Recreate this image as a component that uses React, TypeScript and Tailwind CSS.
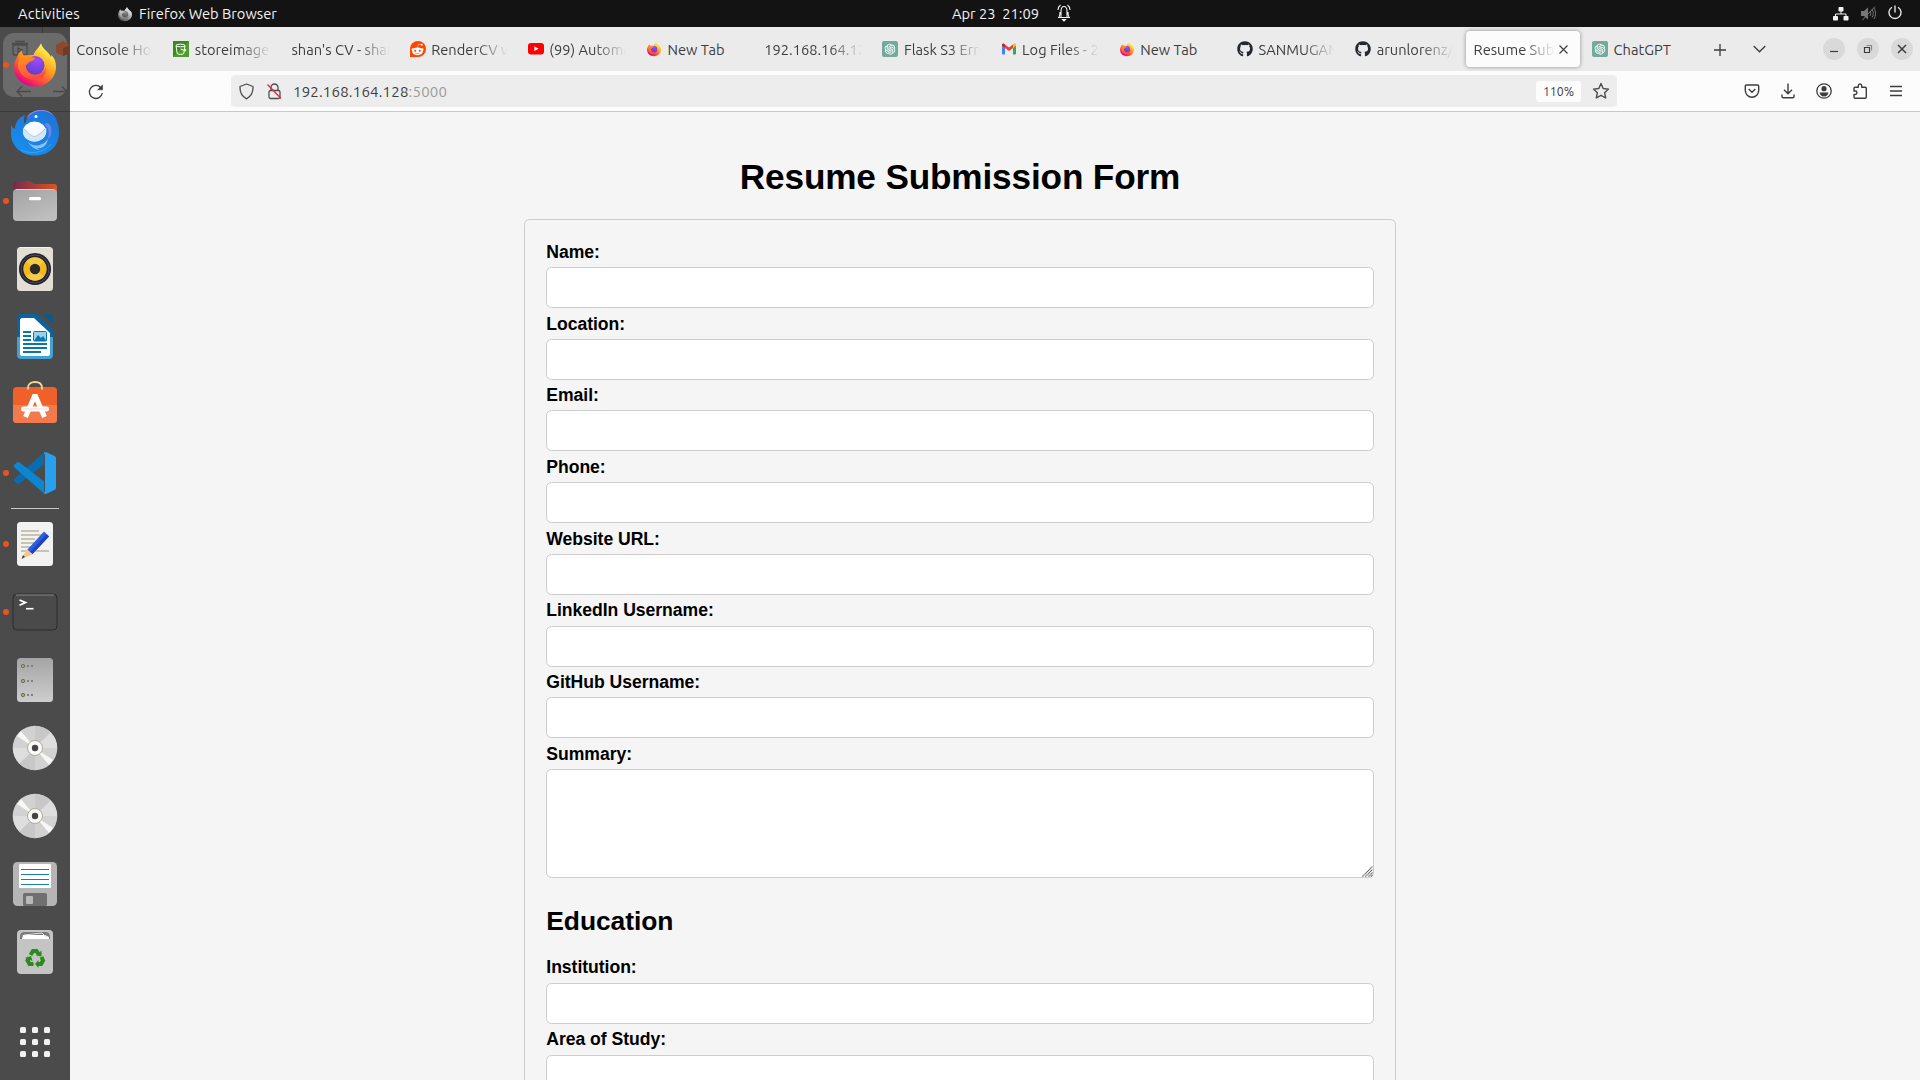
import React, { ReactNode } from "react";
import { FaGithub, FaRedditAlien } from "react-icons/fa";
import { AiOutlineOpenAI } from "react-icons/ai";

/* ---------- brand icons ---------- */

function FirefoxIcon({ size, id, mono = false }: { size: number; id: string; mono?: boolean }) {
  const c = mono
    ? { a: "#f0f0f0", b: "#b5b5b5", c: "#7d7d7d", d: "#5c5c5c", e: "#8f8f8f", f: "#4a4a4a", g: "#d0d0d0" }
    : { a: "#fff44f", b: "#ffa11e", c: "#ff4a3d", d: "#e3008f", e: "#9a4dff", f: "#5b3cc4", g: "#ff9a1c" };
  return (
    <svg width={size} height={size} viewBox="0 0 48 48" className="shrink-0">
      <defs>
        <linearGradient id={id + "a"} x1="0.85" y1="0.05" x2="0.25" y2="0.95">
          <stop offset="0.1" stopColor={c.a} />
          <stop offset="0.45" stopColor={c.b} />
          <stop offset="0.75" stopColor={c.c} />
          <stop offset="1" stopColor={c.d} />
        </linearGradient>
        <radialGradient id={id + "b"} cx="0.6" cy="0.2" r="0.9">
          <stop offset="0" stopColor={c.e} />
          <stop offset="1" stopColor={c.f} />
        </radialGradient>
        <linearGradient id={id + "c"} x1="0" y1="0" x2="0.4" y2="1">
          <stop offset="0" stopColor={c.g} />
          <stop offset="1" stopColor={c.c} />
        </linearGradient>
      </defs>
      <path
        fill={`url(#${id}a)`}
        d="M30 2c-1 4-6 7-7.500 12L13 14.500c-1.500-1-2-3-2.300-5C8 11 6.500 14 6 16.500 4 19.500 3 22.500 3 26c0 11 9.300 19.500 21 19.500S45 37 45 25.500c0-5-2-9-4.500-11.500 0 1-.2 1.500-.5 2C38 11 31.500 8.500 30 2z"
      />
      <circle cx="24" cy="24.500" r="9.500" fill={`url(#${id}b)`} />
      <path
        fill={`url(#${id}c)`}
        d="M9 15.500c5-1.500 8-1 11 .5 1.500.5 3 .500 4 .500 0 2.500-2.500 3.500-5.500 4.500-1.500.6-2 3-4 3.500 1 6 5 9.500 10 9.500 5 0 9-3 10.300-7.500C35 35 30 39.500 23 39 14 38.500 7 32 7 23z"
      />
    </svg>
  );
}

function OpenAiIcon() {
  return (
    <span className="flex size-4 shrink-0 items-center justify-center rounded-[2px] bg-[#74aa9c]">
      <AiOutlineOpenAI className="size-[14px] text-white" />
    </span>
  );
}

function BucketIcon() {
  return (
    <svg width="16" height="16" viewBox="0 0 16 16" className="shrink-0">
      <rect width="16" height="16" fill="#3a8a20" />
      <path d="M0 16L16 0v16z" fill="#4d9c2c" />
      <g fill="none" stroke="#fff" strokeWidth="1">
        <ellipse cx="7.500" cy="4.500" rx="4.500" ry="1.300" />
        <path d="M3 4.500l1.200 8c1.500 1.200 5.200 1.200 6.600 0l1.200-8" />
        <path d="M7.500 8l5 1.800c.8-.2.6-1-.5-1.800" />
      </g>
    </svg>
  );
}

function RedditIcon() {
  return (
    <span className="flex size-4 shrink-0 items-center justify-center rounded-full rounded-bl-[2px] bg-[#ff4500]">
      <FaRedditAlien className="size-[13px] text-white" />
    </span>
  );
}

function YoutubeIcon() {
  return (
    <svg width="16" height="16" viewBox="0 0 16 16" className="shrink-0">
      <rect y="2" width="16" height="11.500" rx="3" fill="#f00" />
      <path d="M6.300 5.300l4.200 2.400-4.200 2.400z" fill="#fff" />
    </svg>
  );
}

function GmailIcon() {
  return (
    <svg width="16" height="16" viewBox="0 0 16 16" className="shrink-0">
      <path d="M1 4.500v8.300c0 .5.400.7.8.7H4V7z" fill="#4285f4" />
      <path d="M15 4.500v8.300c0 .5-.4.700-.8.700H12V7z" fill="#34a853" />
      <path d="M12 3.600V7l3-2.200V4c0-1.500-1.400-1.900-2.300-1.200z" fill="#fbbc04" />
      <path d="M4 7V3.500l4 3 4-3V7l-4 3z" fill="#ea4335" />
      <path d="M1 4v.8L4 7V3.500l-.8-.7C2.300 2.100 1 2.600 1 4z" fill="#c5221f" />
    </svg>
  );
}

/* ---------- top panel ---------- */

function TopPanel() {
  return (
    <header className="flex h-[27px] shrink-0 items-center bg-[#131313] text-[14.670px] leading-[27px] text-[#f2f2f2]">
      <div className="flex w-[952px] items-center">
        <span className="ml-[18px] w-[99px] tracking-[0.18px]">Activities</span>
        <FirefoxIcon size={16} id="fm" mono />
        <span className="ml-[6px]">Firefox Web Browser</span>
      </div>
      <div className="-mt-px flex items-center">
        <span className="whitespace-pre">Apr 23  21:09</span>
        <svg width="14" height="18" viewBox="0 0 14 18" className="ml-[18px]" fill="none" stroke="#f2f2f2" strokeWidth="1.100">
          <path d="M4 13V7.500C4 4 5 2.500 7 2.500S10 4 10 7.500V13M1 13.500h12M2 13c1-1.500 1-3 1-5M12 13c-1-1.500-1-3-1-5M1 6c0-2 .8-3.800 2.500-5M13 6c0-2-.8-3.800-2.500-5" />
          <path d="M5.500 15.500h3L7 17z" fill="#f2f2f2" />
        </svg>
      </div>
      <div className="ml-auto flex items-center gap-[13px] pr-[18px]">
        <svg width="16" height="14" viewBox="0 0 16 14">
          <g fill="#f2f2f2">
            <rect x="5.500" y="0" width="5" height="4.500" rx="0.800" />
            <rect x="0" y="9" width="5" height="4.500" rx="0.800" />
            <rect x="10.500" y="9" width="5" height="4.500" rx="0.800" />
          </g>
          <path d="M8 4v3M2.500 9.500V7h10.500v2.500" fill="none" stroke="#f2f2f2" />
        </svg>
        <svg width="15" height="15" viewBox="0 0 15 15" className="-mt-px -mr-px -ml-px">
          <path d="M0 5h3l4-3.500v12L3 10H0z" fill="#777" />
          <path d="M9 5c1 1.200 1 3.800 0 5M11 3.500c1.700 2 1.700 6 0 8M13 2c2 3 2 8 0 11M14 .5L1.500 14" fill="none" stroke="#777" />
        </svg>
        <svg width="14" height="15" viewBox="0 0 14 15" fill="none" stroke="#f2f2f2" strokeWidth="1.300" className="-mt-[2px]">
          <path d="M7 0.500v7M4 2.300a6 6 0 1 0 6 0" />
        </svg>
      </div>
    </header>
  );
}

/* ---------- dock ---------- */

function DockItem({ children, running = false }: { children?: ReactNode; running?: boolean }) {
  return (
    <div className="relative flex h-[68px] w-[70px] shrink-0 items-center justify-center">
      {running && <span className="absolute top-[31px] left-[3px] size-[6px] rounded-full bg-[#e95420]" />}
      <svg width="48" height="48" viewBox="0 0 48 48" className="relative">
        {children}
      </svg>
    </div>
  );
}

function Disc() {
  return (
    <DockItem>
      <circle cx="24" cy="24" r="22.300" fill="#d2d2d2" />
      <path d="M24 24V2a22 22 0 0 1 15.500 6.500zM24 24v22A22 22 0 0 1 8.500 39.500z" fill="#c8c8c8" />
      <path d="M24 24H2a22 22 0 0 0 6.500 15.500zM24 24h22A22 22 0 0 0 39.500 8.500z" fill="#dedede" />
      <path d="M24 24L6 12l4-5zM24 24l18 12-4 5z" fill="#f7f7f5" />
      <circle cx="24" cy="24" r="7.500" fill="#fafafa" stroke="#b5aa92" />
      <circle cx="24" cy="24" r="3.200" fill="#444" />
    </DockItem>
  );
}

function Dock() {
  return (
    <nav className="relative flex h-full w-[70px] shrink-0 flex-col bg-[#4b4b4b] pt-[4px]">
      {/* Window chrome showing faintly through the translucent dock */}
      <svg width="70" height="86" viewBox="0 0 70 86" className="absolute top-0 left-0" fill="none" stroke="#3b3b3b">
        <path d="M42.500 0v44M0 84.500h70" />
      </svg>
      <div className="relative flex h-full flex-col">
        <div className="relative flex h-[68px] w-[70px] shrink-0 items-center justify-center">
          <span className="absolute top-[2px] left-[3px] size-[64px] rounded-[11px] bg-[#6b6b6b]" />
          <span className="absolute top-[31px] left-[3px] size-[6px] rounded-full bg-[#e95420]" />
          <svg width="70" height="68" viewBox="0 0 70 68" className="absolute top-0 left-0" fill="none" stroke="#4a4a4a" strokeWidth="1.300">
            <rect x="13" y="14" width="14" height="10" rx="1.500" />
            <path d="M12.500 14v-1.500h15V14M15 10.500h10M18 17l4 2-4 2.500zM17 60.500h14M22 55.500l-5 5 5 5M53 60.500h14M62 55.500l5 5-5 5" />
            <path d="M56 14l7-4 7 4v8l-7 3-7-3z" fill="#8b4a2e" stroke="none" />
            <path d="M63 17l7-3v8l-7 3z" fill="#6d3c28" stroke="none" />
          </svg>
          <div className="relative">
            <FirefoxIcon size={48} id="fd" />
          </div>
        </div>

        <DockItem>
          <defs>
            <linearGradient id="tb" x1="0.800" y1="0" x2="0.200" y2="1">
              <stop offset="0" stopColor="#1f73d8" />
              <stop offset="1" stopColor="#1690ee" />
            </linearGradient>
          </defs>
          <path d="M0 16c0 3 .5 5 0 8 0 13 10 22.500 24 22.500S48 37 48 24c0-6-1-9-2-11 0-5-7-12-16-12-7 0-12 3-14 8l-2 6c-2-3-1-6 0-9-5 2-8 5-9 9-1 2-1 3-1 5-2-1-3-2-4-4z" fill="url(#tb)" />
          <path d="M16 9c1-4 6-7.500 13-8 5-.4 11 1 14 6-4-4-9-5.500-14-5-5 .500-9 2.500-13 7z" fill="#9a7ee8" />
          <path d="M33 15c5 4 6 10 3 16 5-3 6-12 2-16-1-1-3-1-5 0z" fill="#6a86e8" />
          <path d="M17 33c6 6 15 4 20-3-1 6-5 10-11 9 1 1 3 2 4 2-5 0-10-3-13-8z" fill="#8fc0ee" />
          <path d="M10 41c8 4 22 4 30-6" stroke="#4fb0ff" strokeWidth="1" fill="none" opacity=".6" />
          <ellipse cx="23.500" cy="22.500" rx="11.500" ry="10" fill="#f7fbff" />
          <path d="M12.500 19c2 4 8 9 11 9s9-6 11.500-9.500c2 7-3 14-11.500 14s-13.500-7-11-13.500z" fill="#d2e6f9" />
          <path d="M13.500 20c4 5 8 7.500 10 7.500S30 24 34 20" fill="none" stroke="#9cc3e8" />
          <circle cx="25" cy="7.500" r="1.500" fill="#fff" />
        </DockItem>

        <DockItem running>
          <defs>
            <linearGradient id="fb" x1="0" x2="1">
              <stop offset="0" stopColor="#77294f" />
              <stop offset="1" stopColor="#e2531f" />
            </linearGradient>
            <linearGradient id="fg" x1="0" y1="0" x2="0.600" y2="1">
              <stop offset="0" stopColor="#a2a2a2" />
              <stop offset="1" stopColor="#bebebe" />
            </linearGradient>
          </defs>
          <path d="M2 16V7c0-2 1-3 3-3h13c2 0 3 3 5 3h20c2 0 3 1 3 3v8z" fill="url(#fb)" />
          <rect x="2" y="12" width="44" height="32" rx="4" fill="url(#fg)" />
          <path d="M5 12.500h38" stroke="#d4d4d4" />
          <rect x="18" y="20" width="12" height="3.300" rx="1.500" fill="#fff" />
        </DockItem>

        <DockItem>
          <rect x="6" y="2" width="36" height="44" rx="3.500" fill="#e4dfd5" />
          <path d="M9 2.500h30" stroke="#f5f2ec" />
          <circle cx="24" cy="24" r="16" fill="#24242e" />
          <circle cx="24" cy="24" r="14" fill="none" stroke="#4b4b5e" />
          <circle cx="24" cy="24" r="11.700" fill="#eeb81e" />
          <path d="M24 24l-9-7.500a11.700 11.700 0 0 1 18 0zM24 24l9 7.500a11.700 11.700 0 0 1-18 0z" fill="#f7d462" opacity=".65" />
          <circle cx="24" cy="24" r="5.200" fill="#2a2a2a" />
        </DockItem>

        <DockItem>
          <path d="M9 1h17l16 16v25c0 2-1 4-4 4H10c-3 0-4-2-4-4V5c0-2 1-4 3-4z" fill="#0a639c" />
          <path d="M6 24h36v18c0 2-1 4-4 4H10c-3 0-4-2-4-4z" fill="#41a3d2" />
          <path d="M11 5h12l16 15v21c0 1-1 2-2 2H11c-1 0-2-1-2-2V7c0-1 1-2 2-2z" fill="#fff" />
          <path d="M32 1h8c1 0 2 1 2 2v8z" fill="#0b5a8a" />
          <path d="M12 19h8M12 23h8M12 27h8M12 31h24M12 35h24M12 39h18" stroke="#0a76ae" strokeWidth="2" />
          <rect x="22.500" y="18.500" width="13" height="9.500" rx="1" fill="#9bd0ec" stroke="#0a76ae" />
          <path d="M23 28l4-6 3 3 2-2 3.500 5z" fill="#0a76ae" />
        </DockItem>

        <DockItem>
          <rect x="2" y="6" width="44" height="36" rx="4" fill="#f0602a" />
          <path d="M2 24h44v14c0 3-1 4-4 4H6c-3 0-4-1-4-4z" fill="#f37a4c" />
          <path d="M17 8.500V7c0-4 3-6 7-6s7 2 7 6v1.500" fill="none" stroke="#f5d49a" strokeWidth="1.800" />
          <path d="M14.500 36L24 14l9.500 22" fill="none" stroke="#fff" strokeWidth="5" strokeLinejoin="bevel" />
          <rect x="10" y="25.500" width="28" height="5" rx="2.500" fill="#fff" />
          <path d="M12 28h24" stroke="#f8c9b8" strokeWidth=".8" />
        </DockItem>

        <DockItem running>
          <path d="M33 3.500v12L8.500 34.500c-1 .8-2 .7-3-.2l-2-2c-1-1-1-2 0-2.800z" fill="#0a6cae" />
          <path d="M33 44.500v-12L8.500 13.500c-1-.8-2-.7-3 .2l-2 2c-1 1-1 2 0 2.800z" fill="#0d86d2" />
          <path d="M33 3.500c1-.5 2-.5 3 0l7.500 3.500c1 .5 1.500 1.500 1.500 2.500v29c0 1-.5 2-1.500 2.500L36 44.500c-1 .5-2 .5-3 0-1-.5 1-1.500 1-3v-35c0-1.500-1.500-2.500-1-3z" fill="#27a0f0" />
        </DockItem>

        <div className="flex h-[3px] w-[70px] shrink-0 items-center justify-center">
          <span className="h-px w-12 bg-[#c9c9c9]" />
        </div>

        <DockItem running>
          <rect x="6" y="2" width="36" height="44" rx="3.500" fill="#f2f2f2" />
          <path d="M10 11h18M10 15h22M10 19h14M10 23h20M10 27h12M10 31h28" stroke="#c8c4b4" strokeWidth="1.800" />
          <path d="M16 30L33 11.500l5 5L21.500 34z" fill="#2f5fe0" />
          <path d="M19 32L35.500 14l2.500 2.500L21.500 34z" fill="#1e45b8" />
          <path d="M16 29l5.500 5.500L10.500 39z" fill="#f4c58e" />
          <path d="M12 35l2 2-3.500 2z" fill="#444" />
        </DockItem>

        <DockItem running>
          <rect x="2" y="6" width="44" height="36" rx="4" fill="#4a4a4a" stroke="#2c2c2c" />
          <path d="M5 7h38" stroke="#858585" />
          <path d="M8.500 12l6 2.600-6 2.700" fill="none" stroke="#fff" strokeWidth="1.800" />
          <path d="M15 20.700h7.500" stroke="#fff" strokeWidth="1.600" />
        </DockItem>

        <DockItem>
          <defs>
            <linearGradient id="cg" x1="0" y1="0" x2="0" y2="1">
              <stop offset="0" stopColor="#a5a5a5" />
              <stop offset="1" stopColor="#cdcdcd" />
            </linearGradient>
          </defs>
          <rect x="6" y="2" width="36" height="44" rx="3.500" fill="url(#cg)" />
          {[10, 25, 39].map((y) => (
            <g key={y}>
              <circle cx="12" cy={y} r="1.700" fill="#8dbb4a" stroke="#6f6f6f" />
              <path d={`M16 ${y}h2M20 ${y}h2`} stroke="#808080" strokeWidth="2" />
            </g>
          ))}
        </DockItem>

        <Disc />
        <Disc />

        <DockItem>
          <rect x="2" y="2" width="44" height="44" rx="4.500" fill="#b5b5b5" />
          <rect x="8" y="4" width="32" height="24" rx="1" fill="#fff" />
          <path d="M10 9.500h28M10 14.500h28M10 19.500h28M10 24.500h28" stroke="#1880a8" />
          <rect x="12" y="33" width="24" height="13" rx="1.500" fill="#6f6f6f" />
          <rect x="15" y="36" width="7" height="8" rx="1" fill="#b9b9b9" />
        </DockItem>

        <DockItem>
          <rect x="6" y="2" width="36" height="44" rx="4" fill="#c4c4c4" />
          <path d="M9 9c0-4 2-5 5-5h20c3 0 5 1 5 5v2H9z" fill="#7b7b7b" />
          <path d="M11 11l1-4h22l4 2v2z" fill="#fff" />
          <path d="M13 7l18-2 5 5" fill="none" stroke="#e0e0e0" />
          <g fill="none" stroke="#2a8a1e" strokeWidth="4">
            <path d="M19.500 27l2.500-4h3.500l2 3" />
            <path d="M30.500 29l1.500 3.500-2 3.500H27" />
            <path d="M22.500 36H18.500L16.500 32.500l1.500-3" />
          </g>
          <path d="M24 36l3.500-4v8zM25 27.500l5.500 1v-6zM14 30l6-2 1.500 5z" fill="#2a8a1e" />
        </DockItem>

        <div className="mt-auto flex h-[76px] items-center justify-center">
          <div className="grid grid-cols-3 gap-[6px]">
            {Array.from({ length: 9 }, (_, i) => (
              <span key={i} className="size-[6px] rounded-[1.500px] bg-[#f2f2f2]" />
            ))}
          </div>
        </div>
      </div>
    </nav>
  );
}

/* ---------- browser ---------- */

const tabs: { label: string; icon?: ReactNode }[] = [
  { label: "storeimage", icon: <BucketIcon /> },
  { label: "shan's CV - shan" },
  { label: "RenderCV v2", icon: <RedditIcon /> },
  { label: "(99) Automate", icon: <YoutubeIcon /> },
  { label: "New Tab", icon: <FirefoxIcon size={16} id="f1" /> },
  { label: "192.168.164.128" },
  { label: "Flask S3 Error", icon: <OpenAiIcon /> },
  { label: "Log Files - 20", icon: <GmailIcon /> },
  { label: "New Tab", icon: <FirefoxIcon size={16} id="f2" /> },
  { label: "SANMUGAN", icon: <FaGithub className="size-4 shrink-0 text-[#24292f]" /> },
  { label: "arunlorenz/", icon: <FaGithub className="size-4 shrink-0 text-[#24292f]" /> },
];

const fade = "mt-[2px] min-w-0 flex-1 overflow-hidden whitespace-nowrap [mask-image:linear-gradient(to_left,transparent,black_32px)]";

function WindowButton({ children }: { children: ReactNode }) {
  return (
    <span className="flex size-[22px] items-center justify-center rounded-full bg-[#d9d9d9]">
      <svg width="10" height="10" viewBox="0 0 10 10" fill="none" stroke="#3d3d3d" strokeWidth="1.200">
        {children}
      </svg>
    </span>
  );
}

function TabStrip() {
  return (
    <div className="flex h-[44px] shrink-0 items-center bg-[#ebebeb] text-[14.670px] text-[#3d3d3d]">
      <div className="flex w-[103.300px] shrink-0 pr-[21px] pl-[6.300px]">
        <span className={fade}>Console Home</span>
      </div>
      {tabs.map((t, i) => (
        <div key={i} className="flex w-[118.200px] shrink-0 items-center gap-[5.500px] pr-[20px]">
          {t.icon}
          <span className={t.label.length > 7 ? fade : "mt-[2px] min-w-0 flex-1 whitespace-nowrap"}>{t.label}</span>
        </div>
      ))}
      <div className="-ml-[7.300px] flex h-[36px] w-[114px] shrink-0 items-center rounded-[4px] bg-[#fcfcfc] pr-[12px] pl-[7.500px] shadow-[0_0_4px_rgba(0,0,0,0.400)]">
        <span className={fade}>Resume Submission</span>
        <svg width="9" height="9" viewBox="0 0 9 9" className="ml-[4px]" stroke="#3d3d3d" strokeWidth="1.100">
          <path d="M.5.5l8 8M8.500.5l-8 8" />
        </svg>
      </div>
      <div className="ml-[12px] flex shrink-0 items-center gap-[5.500px]">
        <OpenAiIcon />
        <span className="mt-[2px]">ChatGPT</span>
      </div>
      <div className="ml-auto flex items-center pr-[7px]">
        <svg width="12" height="12" viewBox="0 0 12 12" className="mt-px mr-[28px]" stroke="#3d3d3d" strokeWidth="1.300">
          <path d="M6 0v12M0 6h12" />
        </svg>
        <svg width="13" height="8" viewBox="0 0 13 8" className="mr-[63px] -ml-px" fill="none" stroke="#3d3d3d" strokeWidth="1.300">
          <path d="M.7 1l5.800 5.800L12.300 1" />
        </svg>
        <div className="-ml-[6px] flex gap-[12px]">
          <WindowButton>
            <path d="M1 7.500h8" />
          </WindowButton>
          <WindowButton>
            <path d="M1.500 3.500h5v5h-5z" />
            <path d="M3.500 1.500h5v5" stroke="#8a8a8a" />
          </WindowButton>
          <WindowButton>
            <path d="M1 1l8 8M9 1L1 9" strokeWidth="1.500" />
          </WindowButton>
        </div>
      </div>
    </div>
  );
}

function Toolbar() {
  return (
    <div className="flex h-[41px] shrink-0 items-center border-b border-[#c8c8c8] bg-[#fcfcfc] text-[#3d3d3d]">
      <svg width="16" height="16" viewBox="0 0 16 16" className="mt-px ml-[18px] shrink-0" fill="none" stroke="#3d3d3d" strokeWidth="1.300">
        <path d="M14.300 9a6.500 6.500 0 1 1-1.500-5.300L14 5" />
        <path d="M14.500 1v4.800H9.700z" fill="#3d3d3d" strokeWidth=".6" />
      </svg>
      <div className="ml-[127px] flex h-8 w-[1386px] shrink-0 items-center rounded-[4px] bg-[#ededed] text-[15px]">
        <svg width="15" height="17" viewBox="0 0 15 17" className="ml-[8px]" fill="none" stroke="#4d4d4d" strokeWidth="1.300">
          <path d="M7.500 1L14 3.500C14.300 9 12 13.500 7.500 15.800 3 13.500.7 9 1 3.500z" strokeLinejoin="round" />
        </svg>
        <svg width="15" height="17" viewBox="0 0 15 17" className="ml-[13px]" fill="none" stroke="#4d4d4d" strokeWidth="1.300">
          <rect x="2" y="7.500" width="11" height="8" rx="1.500" />
          <path d="M4 7.500V4.500a3.500 3.500 0 0 1 7 0v3" />
          <path d="M.5 1.500l13.500 14" stroke="#e22850" strokeWidth="1.400" />
        </svg>
        <span className="mt-[2px] ml-[11px] tracking-[0.200px]">
          192.168.164.128<span className="text-[#9b9b9b]">:5000</span>
        </span>
        <span className="ml-auto flex h-[21px] w-[45px] items-center justify-center rounded-[3px] bg-[#fcfcfc] pt-[2px] text-[12.300px]">110%</span>
        <svg width="18" height="18" viewBox="0 0 18 18" className="mr-[7px] ml-[11px]" fill="none" stroke="#4d4d4d" strokeWidth="1.400" strokeLinejoin="round">
          <path d="M9 1.500l2.200 5 5.300.6-3.900 3.600 1.100 5.300L9 13.300 4.300 16l1.100-5.300L1.500 7.100l5.300-.6z" />
        </svg>
      </div>
      <div className="mr-[16px] ml-auto flex items-center gap-[20px]">
        <svg width="16" height="16" viewBox="0 0 16 16" fill="none" stroke="#3d3d3d" strokeWidth="1.400">
          <path d="M2.500 2h11c.7 0 1.200.5 1.200 1.200v4.300a6.700 6.700 0 0 1-13.400 0V3.200C1.300 2.500 1.800 2 2.500 2z" />
          <path d="M4.700 6L8 9.200 11.300 6" />
        </svg>
        <svg width="16" height="16" viewBox="0 0 16 16" fill="none" stroke="#3d3d3d" strokeWidth="1.400">
          <path d="M8 .5v10M4 6.800l4 4 4-4M2 11.500v2c0 .8.500 1.300 1.300 1.300h9.400c.8 0 1.300-.5 1.300-1.300v-2" />
        </svg>
        <svg width="16" height="16" viewBox="0 0 16 16" fill="none" className="ml-[0.500px]">
          <circle cx="8" cy="8" r="7.200" stroke="#3d3d3d" strokeWidth="1.300" />
          <circle cx="8" cy="5.700" r="2.600" fill="#3d3d3d" />
          <path d="M3.600 9.500h8.800c0 2-1.800 4-4.400 4s-4.400-2-4.400-4z" fill="#3d3d3d" />
        </svg>
        <svg width="16" height="16" viewBox="0 0 16 16" fill="none" stroke="#3d3d3d" strokeWidth="1.400" strokeLinejoin="round">
          <path d="M2 8V5.500C2 4.700 2.500 4.200 3.300 4.200h3V2.800c0-2.400 3.400-2.400 3.400 0v1.400h3.500c.7 0 1.100.5 1.100 1.200V14c0 .7-.4 1.200-1.100 1.200H3.300C2.500 15.200 2 14.700 2 14v-2.500h1.200c2.300 0 2.300-3.500 0-3.500z" />
        </svg>
        <svg width="16" height="16" viewBox="0 0 16 16" stroke="#3d3d3d" strokeWidth="1.400">
          <path d="M2 3.500h12M2 8h12M2 12.500h12" />
        </svg>
      </div>
    </div>
  );
}

/* ---------- page ---------- */

function Field({ label }: { label: string }) {
  return (
    <div className="mb-[4.500px]">
      <label className="block h-[26.200px] pl-[0.300px] leading-[22px] tracking-[-0.040px]">{label}</label>
      <input className="block h-[41px] w-full rounded-[5.500px] border border-[#ccc] bg-white" />
    </div>
  );
}

function Page() {
  return (
    <main className="flex-1 overflow-hidden bg-[#f5f5f5] font-['Liberation_Sans',Arial,sans-serif] text-[17.600px] font-bold text-black">
      {/* The dock covers the window's left edge, so content is centred on the full screen width */}
      <div className="ml-[454px] w-[872px]">
        <h1 className="h-[107px] pt-[45px] text-center text-[35.200px] leading-[40px] tracking-[-0.160px]">Resume Submission Form</h1>
        <form className="h-[1100px] rounded-[5.500px] border border-[#ccc] px-[21px] pt-[20.900px]">
          {["Name:", "Location:", "Email:", "Phone:", "Website URL:", "LinkedIn Username:", "GitHub Username:"].map((l) => (
            <Field key={l} label={l} />
          ))}
          <label className="block h-[26.200px] pl-[0.300px] leading-[22px] tracking-[-0.040px]">Summary:</label>
          <div className="relative">
            <textarea className="block h-[109px] w-full resize-none rounded-[5.500px] border border-[#ccc] bg-white" />
            <svg width="11" height="11" viewBox="0 0 11 11" className="absolute right-[1px] bottom-[1px]" stroke="#555" strokeWidth="1.100" strokeDasharray="1.200 0.400">
              <path d="M.5 10.500l10-10M3.500 10.500l7-7M6.500 10.500l4-4M9 10.500l1.500-1.500" />
            </svg>
          </div>
          <h2 className="mt-[28.300px] mb-[20.150px] pl-[0.300px] text-[26.400px] leading-[30px] tracking-[-0.050px]">Education</h2>
          <Field label="Institution:" />
          <div className="pt-[0.300px]">
            <Field label="Area of Study:" />
          </div>
        </form>
      </div>
    </main>
  );
}

export default function App() {
  return (
    <div className="flex h-[1080px] w-[1920px] flex-col overflow-hidden bg-[#f5f5f5] font-['Ubuntu','Noto_Sans',sans-serif]">
      <TopPanel />
      <div className="flex min-h-0 flex-1">
        <Dock />
        <div className="flex min-w-0 flex-1 flex-col">
          <TabStrip />
          <Toolbar />
          <Page />
        </div>
      </div>
    </div>
  );
}
